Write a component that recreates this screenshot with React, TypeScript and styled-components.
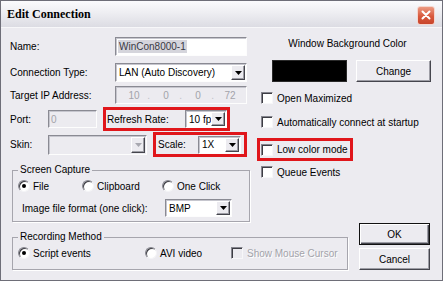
import React from "react";
import styled, { createGlobalStyle, css } from "styled-components";

const FACE = "#ecebf0";
const RED = "#e0161b";
const GREY_TEXT = "#a3a3aa";

const GlobalStyle = createGlobalStyle`
  html, body {
    margin: 0;
    padding: 0;
    background: ${FACE};
  }
  body {
    font-family: "Liberation Sans", Arial, sans-serif;
    font-size: 10px;
    color: #000;
  }
  * {
    box-sizing: border-box;
  }
`;

const sunken = css`
  border: 1px solid;
  border-color: #8a8a93 #fdfdfd #fdfdfd #8a8a93;
  box-shadow: inset 1px 1px 0 #c6c6ce;
`;

const raised = css`
  background: ${FACE};
  border: 1px solid;
  border-color: #fff #45454d #45454d #fff;
  box-shadow: inset -1px -1px 0 #9d9da5;
`;

const Window = styled.div`
  width: 443px;
  height: 281px;
  border: 1px solid #6e6e78;
  background: ${FACE};
  display: flex;
  flex-direction: column;
  overflow: hidden;
`;

const TitleBar = styled.div`
  height: 27px;
  flex: none;
  display: flex;
  align-items: center;
  justify-content: space-between;
  padding: 0 7px 0 6px;
  background: linear-gradient(180deg, #fbfbfd 0%, #eeeef2 45%, #dcdce3 100%);
  border-bottom: 1px solid #f7f7f9;
`;

const Title = styled.div`
  font-family: "Liberation Serif", "Times New Roman", serif;
  font-weight: bold;
  font-size: 12px;
`;

const CloseButton = styled.div`
  width: 18px;
  height: 19px;
  margin-top: 2px;
  border-radius: 3px;
  border: 1px solid #f4d6cf;
  background: linear-gradient(180deg, #ec9a82 0%, #d8583c 55%, #c8452b 100%);
  display: flex;
  align-items: center;
  justify-content: center;
`;

const Body = styled.div`
  flex: 1;
  padding: 9px 9px 0 9px;
  display: flex;
  flex-direction: column;
`;

const Top = styled.div`
  display: flex;
  gap: 6px;
`;

const LeftCol = styled.div`
  width: 241px;
  display: flex;
  flex-direction: column;
`;

const RightCol = styled.div`
  width: 176px;
  display: flex;
  flex-direction: column;
`;

const Row = styled.div<{ $h: number; $mt?: number }>`
  height: ${(p) => p.$h}px;
  margin-top: ${(p) => p.$mt ?? 0}px;
  display: flex;
  align-items: center;
`;

const Label = styled.span<{ $w?: number }>`
  width: ${(p) => (p.$w ? `${p.$w}px` : "auto")};
  flex: none;
  white-space: nowrap;
`;

const TextBox = styled.div<{ $w: number; $h?: number; $disabled?: boolean }>`
  ${sunken};
  width: ${(p) => p.$w}px;
  height: ${(p) => p.$h ?? 19}px;
  background: ${(p) => (p.$disabled ? FACE : "#fff")};
  color: ${(p) => (p.$disabled ? GREY_TEXT : "#000")};
  display: flex;
  align-items: center;
  padding-left: 2px;
`;

const Selected = styled.span`
  background: #d5d5dc;
  color: #3a3a44;
  padding: 0 1px;
  line-height: 13px;
`;

const IpSegment = styled.span`
  flex: 1;
  text-align: center;
  position: relative;
  &:not(:last-child)::after {
    content: ".";
    position: absolute;
    right: 0;
    color: #c2c2c8;
  }
`;

const Combo = styled.div<{ $w: number; $h?: number; $disabled?: boolean; $mr?: number }>`
  ${sunken};
  width: ${(p) => p.$w}px;
  height: ${(p) => p.$h ?? 18}px;
  margin-right: ${(p) => p.$mr ?? 0}px;
  flex: none;
  background: ${(p) => (p.$disabled ? FACE : "#fff")};
  display: flex;
  align-items: stretch;
  padding: 1px 1px 1px 3px;
`;

const ComboText = styled.span`
  flex: 1;
  display: flex;
  align-items: center;
  white-space: nowrap;
`;

const ComboButton = styled.span`
  ${raised};
  width: 14px;
  flex: none;
  display: flex;
  align-items: center;
  justify-content: center;
`;

const Highlight = styled.div<{ $w: number; $h: number; $mt?: number; $pl?: number }>`
  width: ${(p) => p.$w}px;
  height: ${(p) => p.$h}px;
  margin-top: ${(p) => p.$mt ?? 0}px;
  border: 3px solid ${RED};
  display: flex;
  align-items: center;
  justify-content: space-between;
  padding-left: ${(p) => p.$pl ?? 1}px;
  flex: none;
`;

const Group = styled.fieldset<{ $w: number; $mt?: number; $pb: number }>`
  width: ${(p) => p.$w}px;
  margin: ${(p) => p.$mt ?? 0}px 0 0 2px;
  padding: 0 0 ${(p) => p.$pb}px 5px;
  min-width: 0;
  border: 1px solid #a6a5ad;
  box-shadow: 1px 1px 0 #fff;
`;

const Legend = styled.legend`
  padding: 0 2px;
  line-height: 12px;
  font-size: 10px;
`;

const OptionRow = styled.div<{ $h: number; $mt: number; $pl?: number }>`
  height: ${(p) => p.$h}px;
  margin-top: ${(p) => p.$mt}px;
  padding-left: ${(p) => p.$pl ?? 0}px;
  display: flex;
  align-items: center;
`;

const Option = styled.label<{ $w?: number; $disabled?: boolean }>`
  width: ${(p) => (p.$w ? `${p.$w}px` : "auto")};
  flex: none;
  display: flex;
  align-items: center;
  gap: 3px;
  white-space: nowrap;
  color: ${(p) => (p.$disabled ? GREY_TEXT : "#000")};
  text-shadow: ${(p) => (p.$disabled ? "1px 1px 0 #fff" : "none")};
`;

const RadioDot = styled.span<{ $checked?: boolean }>`
  width: 12px;
  height: 12px;
  border-radius: 50%;
  background: #fff;
  border: 1px solid;
  border-color: #85858e #f4f4f6 #f4f4f6 #85858e;
  box-shadow: inset 1px 1px 0 #3d3d44;
  display: flex;
  align-items: center;
  justify-content: center;
  &::after {
    content: "";
    width: 4px;
    height: 4px;
    border-radius: 50%;
    background: #000;
    display: ${(p) => (p.$checked ? "block" : "none")};
  }
`;

const CheckBox = styled.span<{ $disabled?: boolean }>`
  width: 12px;
  height: 12px;
  flex: none;
  background: ${(p) => (p.$disabled ? FACE : "#fff")};
  border: 1px solid;
  border-color: #85858e #f7f7f9 #f7f7f9 #85858e;
  box-shadow: inset 1px 1px 0 #3d3d44;
`;

const CheckRow = styled.label<{ $mt: number }>`
  height: 16px;
  margin-top: ${(p) => p.$mt}px;
  padding-left: 4px;
  display: flex;
  align-items: center;
  gap: 4px;
  white-space: nowrap;
`;

const CheckInBox = styled.label`
  display: flex;
  align-items: center;
  gap: 4px;
  white-space: nowrap;
`;

const Heading = styled.div`
  line-height: 14px;
  text-align: center;
  padding-left: 5px;
`;

const ColorRow = styled.div`
  margin-top: 9px;
  height: 22px;
  display: flex;
  padding-left: 15px;
  gap: 9px;
`;

const Swatch = styled.div<{ $color: string }>`
  width: 75px;
  height: 22px;
  background: ${(p) => p.$color};
  border: 1px solid #2a2a2a;
`;

const Button = styled.button<{ $w: number; $h: number; $default?: boolean }>`
  ${raised};
  width: ${(p) => p.$w}px;
  height: ${(p) => p.$h}px;
  padding: 0;
  font-family: inherit;
  font-size: 10px;
  color: #000;
  ${(p) =>
    p.$default &&
    css`
      border-color: #111;
      box-shadow: inset 1px 1px 0 #fff, inset -1px -1px 0 #45454d, inset -2px -2px 0 #9d9da5;
    `}
`;

const BottomRow = styled.div`
  margin-top: 1px;
  display: flex;
  align-items: flex-end;
  justify-content: space-between;
`;

const ButtonCol = styled.div`
  display: flex;
  flex-direction: column;
  gap: 3px;
  margin-right: 3px;
`;

const Arrow = ({ disabled }: { disabled?: boolean }) => (
  <svg width="7" height="4" viewBox="0 0 7 4">
    <polygon points="0,0 7,0 3.5,4" fill={disabled ? "#a8a8b0" : "#000"} />
  </svg>
);

interface DropdownProps {
  value?: string;
  w: number;
  h?: number;
  mr?: number;
  disabled?: boolean;
}

const Dropdown: React.FC<DropdownProps> = ({ value = "", w, h, mr, disabled }) => (
  <Combo $w={w} $h={h} $mr={mr} $disabled={disabled}>
    <ComboText>{value}</ComboText>
    <ComboButton>
      <Arrow disabled={disabled} />
    </ComboButton>
  </Combo>
);

const App: React.FC = () => {
  return (
    <>
      <GlobalStyle />
      <Window>
        <TitleBar>
          <Title>Edit Connection</Title>
          <CloseButton>
            <svg width="10" height="10" viewBox="0 0 10 10">
              <path d="M1.5 1.5L8.5 8.5M8.5 1.5L1.5 8.5" stroke="#fff" strokeWidth="2" strokeLinecap="round" />
            </svg>
          </CloseButton>
        </TitleBar>
        <Body>
          <Top>
            <LeftCol>
              <Row $h={19}>
                <Label $w={105}>Name:</Label>
                <TextBox $w={132}>
                  <Selected>WinCon8000-1</Selected>
                </TextBox>
              </Row>
              <Row $h={19} $mt={7}>
                <Label $w={105}>Connection Type:</Label>
                <Dropdown value="LAN (Auto Discovery)" w={132} h={19} />
              </Row>
              <Row $h={18} $mt={4}>
                <Label $w={105}>Target IP Address:</Label>
                <TextBox $w={132} $h={18} $disabled>
                  <IpSegment>10</IpSegment>
                  <IpSegment>0</IpSegment>
                  <IpSegment>0</IpSegment>
                  <IpSegment>72</IpSegment>
                </TextBox>
              </Row>
              <Row $h={24} $mt={3}>
                <Label $w={38}>Port:</Label>
                <TextBox $w={49} $h={18} $disabled>
                  0
                </TextBox>
                <Highlight $w={127} $h={24} style={{ marginLeft: 6 }}>
                  <Label>Refresh Rate:</Label>
                  <Dropdown value="10 fp" w={42} />
                </Highlight>
              </Row>
              <Row $h={25} $mt={1}>
                <Label $w={38}>Skin:</Label>
                <Dropdown w={99} h={20} disabled />
                <Highlight $w={94} $h={25} $pl={2} style={{ marginLeft: 6 }}>
                  <Label>Scale:</Label>
                  <Dropdown value="1X" w={43} mr={3} />
                </Highlight>
              </Row>
              <Group $w={238} $mt={7} $pb={4}>
                <Legend>Screen Capture</Legend>
                <OptionRow $h={12} $mt={4}>
                  <Option $w={64}>
                    <RadioDot $checked />
                    File
                  </Option>
                  <Option $w={80}>
                    <RadioDot />
                    Clipboard
                  </Option>
                  <Option>
                    <RadioDot />
                    One Click
                  </Option>
                </OptionRow>
                <OptionRow $h={18} $mt={7} $pl={4}>
                  <Label $w={143}>Image file format (one click):</Label>
                  <Dropdown value="BMP" w={67} />
                </OptionRow>
              </Group>
            </LeftCol>
            <RightCol>
              <Heading>Window Background Color</Heading>
              <ColorRow>
                <Swatch $color="#000" />
                <Button $w={75} $h={22}>
                  Change
                </Button>
              </ColorRow>
              <CheckRow $mt={8}>
                <CheckBox />
                Open Maximized
              </CheckRow>
              <CheckRow $mt={8}>
                <CheckBox />
                Automatically connect at startup
              </CheckRow>
              <Highlight $w={96} $h={23} $mt={8} style={{ justifyContent: "flex-start" }}>
                <CheckInBox>
                  <CheckBox />
                  Low color mode
                </CheckInBox>
              </Highlight>
              <CheckRow $mt={3}>
                <CheckBox />
                Queue Events
              </CheckRow>
            </RightCol>
          </Top>
          <BottomRow>
            <Group $w={336} $pb={10}>
              <Legend>Recording Method</Legend>
              <OptionRow $h={12} $mt={4}>
                <Option $w={127}>
                  <RadioDot $checked />
                  Script events
                </Option>
                <Option $w={86}>
                  <RadioDot />
                  AVI video
                </Option>
                <Option $disabled style={{ gap: 4 }}>
                  <CheckBox $disabled />
                  Show Mouse Cursor
                </Option>
              </OptionRow>
            </Group>
            <ButtonCol>
              <Button $w={71} $h={22} $default>
                OK
              </Button>
              <Button $w={71} $h={22}>
                Cancel
              </Button>
            </ButtonCol>
          </BottomRow>
        </Body>
      </Window>
    </>
  );
};

export default App;
